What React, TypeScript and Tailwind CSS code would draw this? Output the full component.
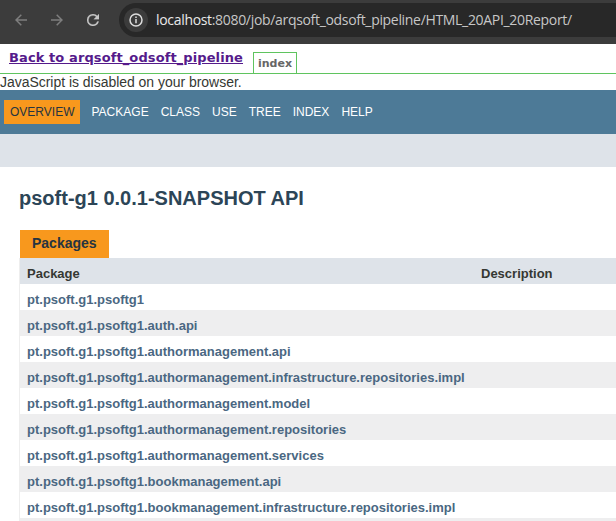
const packages = [
  'pt.psoft.g1.psoftg1',
  'pt.psoft.g1.psoftg1.auth.api',
  'pt.psoft.g1.psoftg1.authormanagement.api',
  'pt.psoft.g1.psoftg1.authormanagement.infrastructure.repositories.impl',
  'pt.psoft.g1.psoftg1.authormanagement.model',
  'pt.psoft.g1.psoftg1.authormanagement.repositories',
  'pt.psoft.g1.psoftg1.authormanagement.services',
  'pt.psoft.g1.psoftg1.bookmanagement.api',
  'pt.psoft.g1.psoftg1.bookmanagement.infrastructure.repositories.impl',
];

const links = ['PACKAGE', 'CLASS', 'USE', 'TREE', 'INDEX', 'HELP'];

function BrowserBar() {
  return (
    <header className="flex h-11 shrink-0 bg-[#3c3c3c] pt-[3px]">
      <div className="flex h-[34px] w-[119px] shrink-0 items-center pl-[15px]">
        <svg width="12" height="12" viewBox="0 0 12 12" fill="none" stroke="#7e7e7e" strokeWidth="1.5">
          <path d="M12 6H1M6.3 .7 1 6l5.3 5.3" />
        </svg>
        <svg className="ml-6" width="12" height="12" viewBox="0 0 12 12" fill="none" stroke="#7e7e7e" strokeWidth="1.5">
          <path d="M0 6h11M5.7 .7 11 6l-5.3 5.3" />
        </svg>
        <svg className="ml-6" width="12" height="12" viewBox="4 4 16 16" fill="#c7c7c7" stroke="#c7c7c7" strokeWidth=".3">
          <path d="M17.65 6.35A7.96 7.96 0 0 0 12 4a8 8 0 1 0 7.73 10h-2.08A6 6 0 1 1 12 6c1.66 0 3.14.69 4.22 1.78L13 11h7V4l-2.35 2.35z" />
        </svg>
      </div>
      <div className="flex h-[34px] flex-1 items-center rounded-l-full bg-[#282828] pl-[5px]">
        <span className="flex h-6 w-6 items-center justify-center rounded-full bg-[#3c3c3c]">
          <svg width="14" height="14" viewBox="0 0 14 14" fill="none" stroke="#dedede" strokeWidth="1.5">
            <circle cx="7" cy="7" r="6" />
            <path d="M7 6v4.2M7 3.6v1.5" />
          </svg>
        </span>
        <span className="ml-2 whitespace-nowrap font-['Open_Sans',sans-serif] text-[14px] leading-5 tracking-[-0.32px] text-[#c7c7c7]">
          <span className="text-[#e8e8e8]">localhost</span>:8080/job/arqsoft_odsoft_pipeline/HTML_20API_20Report/
        </span>
      </div>
    </header>
  );
}

export default function App() {
  return (
    <div className="flex h-[521px] w-[616px] flex-col overflow-hidden bg-white font-['Liberation_Sans',Arial,sans-serif] text-[#353833]">
      <BrowserBar />
      <div className="flex h-[30px] shrink-0 items-end border-b border-[#5fc45f] pl-[9px] font-['DejaVu_Sans',Verdana,sans-serif] font-bold">
        <a className="mb-[5px] w-[244px] whitespace-nowrap text-[13px] leading-5 tracking-[0.1px] text-[#551a8b] underline">Back to arqsoft_odsoft_pipeline</a>
        <span className="h-[21px] w-11 border border-b-0 border-[#5fc45f] pl-1 text-[11px] leading-[21px] text-[#666]">index</span>
      </div>
      <div className="h-4 shrink-0 whitespace-nowrap text-[14px] leading-4 tracking-[-0.03px]">JavaScript is disabled on your browser.</div>
      <nav className="flex h-11 shrink-0 items-start gap-3 bg-[#4d7a97] pl-1 pt-[10px] text-[12px] leading-6 text-white">
        <span className="mr-[-0.5px] w-[76px] bg-[#f8981d] pl-[6px] text-[#253441]">OVERVIEW</span>
        {links.map((link) => (
          <span key={link}>{link}</span>
        ))}
      </nav>
      <div className="h-[33px] shrink-0 bg-[#dee3e9]" />
      <main className="flex flex-1 flex-col pl-[19px]">
        <h1 className="h-[63px] whitespace-nowrap pt-[19px] text-[20px] font-bold leading-6 text-[#2c4557]">psoft-g1 0.0.1-SNAPSHOT API</h1>
        <div className="ml-px h-7 w-[89px] bg-[#f8981d] pl-3 text-[14px] font-bold leading-[27px] text-[#253441]">Packages</div>
        <div className="border-l border-[#eee] text-[13px] font-bold">
          <div className="flex h-[26px] bg-[#dee3e9] pl-[7px] leading-[31px]">
            <span className="w-[454px]">Package</span>
            <span>Description</span>
          </div>
          {packages.map((name) => (
            <div key={name} className="h-[26px] whitespace-nowrap pl-[7px] leading-[31px] text-[#4a6782] odd:bg-[#eeeeef]">
              {name}
            </div>
          ))}
          <div className="h-[26px] bg-[#eeeeef]" />
        </div>
      </main>
    </div>
  );
}
